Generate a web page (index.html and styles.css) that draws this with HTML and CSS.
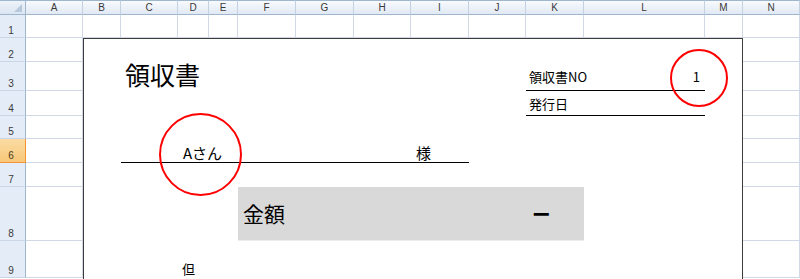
FILE: index.html
```html
<!DOCTYPE html>
<html lang="ja">
<head>
<meta charset="utf-8">
<title>領収書</title>
<link rel="stylesheet" href="styles.css">
</head>
<body>
<div class="sheet">
  <div class="receipt">
    <div class="title">領収書</div>
    <div class="meta meta-no"><span>領収書NO</span><span class="num">1</span></div>
    <div class="meta meta-date"><span>発行日</span></div>
    <div class="addressee"><span class="name">Aさん</span><span class="sama">様</span></div>
    <div class="amount"><span class="amount-label">金額</span><span class="amount-value">−</span></div>
    <div class="tadashi">但</div>
  </div>

  <div class="corner"></div>
  <div class="ch">A</div><div class="ch">B</div><div class="ch">C</div><div class="ch">D</div><div class="ch">E</div><div class="ch">F</div><div class="ch">G</div><div class="ch">H</div><div class="ch">I</div><div class="ch">J</div><div class="ch">K</div><div class="ch">L</div><div class="ch">M</div><div class="ch">N</div>

  <div class="rh">1</div><div class="c"></div><div class="c"></div><div class="c"></div><div class="c"></div><div class="c"></div><div class="c"></div><div class="c"></div><div class="c"></div><div class="c"></div><div class="c"></div><div class="c"></div><div class="c"></div><div class="c"></div><div class="c"></div>
  <div class="rh">2</div><div class="c"></div><div class="c"></div>
  <div class="rh">3</div><div class="c"></div><div class="c"></div>
  <div class="rh">4</div><div class="c"></div><div class="c"></div>
  <div class="rh">5</div><div class="c"></div><div class="c"></div>
  <div class="rh active">6</div><div class="c"></div><div class="c"></div>
  <div class="rh">7</div><div class="c"></div><div class="c"></div>
  <div class="rh">8</div><div class="c"></div><div class="c"></div>
  <div class="rh">9</div><div class="c"></div><div class="c"></div>

  <div class="mark mark-no"></div>
  <div class="mark mark-name"></div>
</div>
</body>
</html>
```
FILE: styles.css
```css
html, body {
  margin: 0;
  padding: 0;
  background: #ffffff;
}
body {
  width: 800px;
  height: 279px;
  overflow: hidden;
}
.sheet {
  position: relative;
  display: grid;
  grid-template-columns: 26px 57px 38px 57px 31px 29px 58px 58px 57px 58px 57px 58px 121px 38px 57px;
  grid-template-rows: 15px 23px 24px 29px 25px 23px 24px 24px 54px 37px 1px;
  font-family: "Liberation Sans", Arial, sans-serif;
}
.corner {
  box-sizing: border-box;
  position: relative;
  background: linear-gradient(#eef3fa, #dbe5f2);
  border-top: 1px solid #9eb6ce;
  border-right: 1px solid #9eb6ce;
  border-bottom: 1px solid #9eb6ce;
}
.corner::after {
  content: "";
  position: absolute;
  right: 3px;
  bottom: 2px;
  width: 0;
  height: 0;
  border-left: 8px solid transparent;
  border-bottom: 8px solid #b7c8dc;
}
.ch {
  box-sizing: border-box;
  background: linear-gradient(#f8fafd, #e1e9f4);
  border-top: 1px solid #9eb6ce;
  border-right: 1px solid #c3d1e2;
  border-bottom: 1px solid #9eb6ce;
  color: #3a3a3a;
  font-size: 10px;
  line-height: 13px;
  text-align: center;
}
.rh {
  box-sizing: border-box;
  display: flex;
  align-items: flex-end;
  justify-content: center;
  padding: 0 3px 1px 0;
  background: #e4ecf7;
  border-right: 1px solid #9eb6ce;
  border-bottom: 1px solid #c9d6e6;
  color: #3a3a3a;
  font-size: 10px;
  line-height: 11px;
}
.rh.active {
  background: linear-gradient(#fbdca4, #f7c878);
  border-right-color: #f29436;
  border-bottom-color: #f29436;
  color: #4a3a1f;
}
.c {
  box-sizing: border-box;
  border-right: 1px solid #d0d7e5;
  border-bottom: 1px solid #d0d7e5;
}

/* receipt form */
.receipt {
  grid-column: 3 / 15;
  grid-row: 3 / 12;
  box-sizing: border-box;
  background: #ffffff;
  border: 1px solid #3c3c3c;
  border-bottom: none;
  display: grid;
  grid-template-columns: 37px 57px 31px 29px 58px 58px 57px 58px 57px 58px 121px 37px;
  grid-template-rows: 23px 29px 25px 23px 24px 24px 54px 37px;
  font-family: "Noto Sans CJK JP", "Noto Sans", sans-serif;
  color: #000000;
}
.title {
  grid-column: 2 / 6;
  grid-row: 2;
  padding-left: 4px;
  font-size: 25px;
  line-height: 25px;
  white-space: nowrap;
}
.meta {
  grid-column: 10 / 12;
  box-sizing: border-box;
  display: flex;
  align-items: flex-end;
  justify-content: space-between;
  padding: 0 5px 0 3px;
  border-bottom: 1px solid #000000;
  font-size: 13px;
  line-height: 13px;
  white-space: nowrap;
}
.meta-no {
  grid-row: 2;
  padding-bottom: 7px;
}
.meta-date {
  grid-row: 3;
  padding-bottom: 5px;
}
.addressee {
  grid-column: 2 / 9;
  grid-row: 5;
  box-sizing: border-box;
  display: flex;
  align-items: flex-end;
  padding-bottom: 2px;
  border-bottom: 1px solid #000000;
  font-size: 15px;
  line-height: 15px;
  white-space: nowrap;
}
.name {
  margin-left: 62px;
}
.sama {
  margin-left: auto;
  margin-right: 38px;
}
.amount {
  grid-column: 5 / 11;
  grid-row: 7;
  display: flex;
  align-items: center;
  background: #d9d9d9;
  border-bottom: 1px solid #ececec;
}
.amount-label {
  padding-left: 5px;
  font-size: 21px;
  line-height: 21px;
}
.amount-value {
  margin-left: auto;
  margin-right: 33px;
  font-family: "DejaVu Sans", sans-serif;
  font-weight: bold;
  font-size: 24px;
  line-height: 24px;
}
.tadashi {
  grid-column: 3;
  grid-row: 8;
  align-self: end;
  padding: 0 0 3px 4px;
  font-size: 13px;
  line-height: 13px;
}

/* red check marks drawn on top of the sheet */
.mark {
  position: absolute;
  box-sizing: border-box;
  border: 2px solid #ff0000;
  border-radius: 50%;
}
.mark-no {
  left: 670px;
  top: 49px;
  width: 58px;
  height: 58px;
}
.mark-name {
  left: 159px;
  top: 113px;
  width: 83px;
  height: 83px;
}
```
